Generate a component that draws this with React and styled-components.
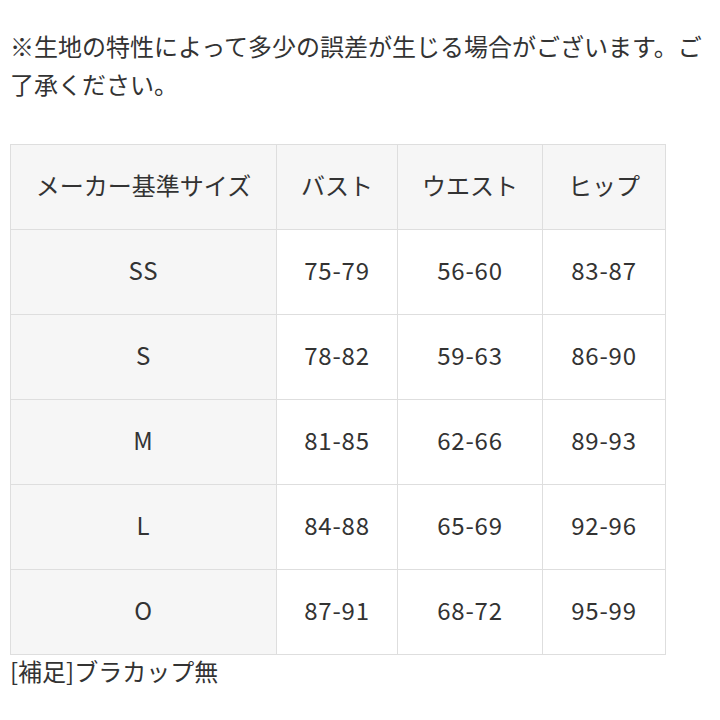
import React from 'react';
import styled, { createGlobalStyle } from 'styled-components';

const GlobalStyle = createGlobalStyle`
  body {
    margin: 0;
    background: #fff;
    font-family: "Noto Sans CJK JP", "Noto Sans", sans-serif;
    color: #333;
  }
`;

const Page = styled.div`
  padding: 27px 0 0 10px;
  width: 700px;
`;

const Note = styled.p`
  margin: 0 0 41px;
  font-size: 24px;
  line-height: 38px;
`;

const SizeTable = styled.table`
  width: 655px;
  border-collapse: collapse;
  table-layout: fixed;
  font-size: 24px;
`;

const Col = styled.col`
  width: ${(p) => p.$w}px;
`;

const Cell = styled.td`
  height: 79px;
  padding: 0 0 5px;
  border: 1px solid #dedede;
  text-align: center;
  vertical-align: middle;
  letter-spacing: 0.8px;
  background: ${(p) => (p.$shaded ? '#f6f6f6' : '#fff')};
`;

const HeadCell = styled(Cell).attrs({ as: 'th' })`
  font-weight: normal;
  letter-spacing: 0;
  background: #f6f6f6;
`;

const Footer = styled.div`
  font-size: 24px;
  line-height: 31px;
`;

const widths = [266, 121, 145, 123];
const headers = ['メーカー基準サイズ', 'バスト', 'ウエスト', 'ヒップ'];
const rows = [
  ['SS', '75-79', '56-60', '83-87'],
  ['S', '78-82', '59-63', '86-90'],
  ['M', '81-85', '62-66', '89-93'],
  ['L', '84-88', '65-69', '92-96'],
  ['O', '87-91', '68-72', '95-99'],
];

const App = () => (
  <>
    <GlobalStyle />
    <Page>
      <Note>
        ※生地の特性によって多少の誤差が生じる場合がございます。ご了承ください。
      </Note>
      <SizeTable>
        <colgroup>
          {widths.map((w, i) => (
            <Col key={i} $w={w} />
          ))}
        </colgroup>
        <thead>
          <tr>
            {headers.map((h) => (
              <HeadCell key={h}>{h}</HeadCell>
            ))}
          </tr>
        </thead>
        <tbody>
          {rows.map((r) => (
            <tr key={r[0]}>
              {r.map((v, i) => (
                <Cell key={i} $shaded={i === 0}>
                  {v}
                </Cell>
              ))}
            </tr>
          ))}
        </tbody>
      </SizeTable>
      <Footer>[補足]ブラカップ無</Footer>
    </Page>
  </>
);

export default App;
